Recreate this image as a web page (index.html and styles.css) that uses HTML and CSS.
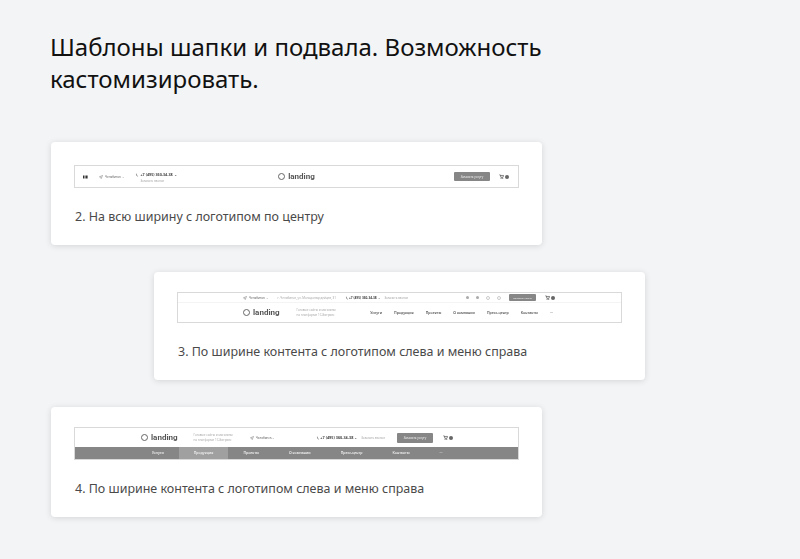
FILE: index.html
```html
<!DOCTYPE html>
<html lang="ru">
<head>
<meta charset="utf-8">
<title>Шаблоны шапки и подвала</title>
<link rel="stylesheet" href="styles.css">
</head>
<body>
<svg class="defs" width="0" height="0" aria-hidden="true">
  <symbol id="pin" viewBox="0 0 10 10"><path d="M9 1 1 4.6l3.6.9.9 3.6z" fill="none" stroke="currentColor" stroke-width="1.2"/></symbol>
  <symbol id="phone" viewBox="0 0 10 10"><path d="M3 1c-1 1-1 3 .5 5S7 9 8 8.500L6.500 6.500 5.500 7C4.500 6 4 5 3.800 4l1-.6z" fill="currentColor"/></symbol>
  <symbol id="cart" viewBox="0 0 12 12"><path d="M1 2h2l1.500 6h5L11 3.500H3.500" fill="none" stroke="currentColor" stroke-width="1.500"/><circle cx="5" cy="10.300" r="1.200" fill="currentColor"/><circle cx="9" cy="10.300" r="1.200" fill="currentColor"/></symbol>
</svg>
<main class="page">
  <h1 class="title">Шаблоны шапки и подвала. Возможность кастомизировать.</h1>

  <section class="card card-one">
    <div class="mock mock-center">
      <div class="side">
        <svg class="mark" viewBox="0 0 5 4" aria-hidden="true"><rect x="0" y="0.500" width="1.500" height="3"/><rect x="2.400" y="0.500" width="2.200" height="3"/></svg>
        <span class="city one-city"><svg class="ico"><use href="#pin"/></svg>Челябинск ⌄</span>
        <svg class="ico one-phone"><use href="#phone"/></svg>
        <div class="contact">
          <b class="tel">+7 (495) 360-34-38 ⌄</b>
          <span class="muted">Заказать звонок</span>
        </div>
      </div>
      <div class="logo"><i class="ring"></i>landing</div>
      <div class="side side-end">
        <span class="btn btn-one">Заказать услугу</span>
        <span class="basket"><svg class="cart"><use href="#cart"/></svg><i class="dot"></i></span>
      </div>
    </div>
    <p class="caption">2. На всю ширину с логотипом по центру</p>
  </section>

  <section class="card card-two">
    <div class="mock">
      <div class="top-two">
        <span class="city"><svg class="ico"><use href="#pin"/></svg>Челябинск ⌄</span>
        <span class="muted addr">г. Челябинск, ул. Молодогвардейцев, 31</span>
        <svg class="ico two-phone"><use href="#phone"/></svg>
        <b class="tel">+7 (495) 360-34-38 ⌄</b>
        <span class="muted call">Заказать звонок</span>
        <span class="socials"><i class="soc"></i><i class="soc"></i><i class="soc ring-soc"></i><i class="soc ring-soc"></i></span>
        <span class="btn btn-two">Заказать услугу</span>
        <span class="basket"><svg class="cart"><use href="#cart"/></svg><i class="dot"></i></span>
      </div>
      <div class="bottom-two">
        <div class="logo"><i class="ring"></i>landing</div>
        <div class="muted tagline">Готовые сайты и магазины<br>на платформе 1С-Битрикс</div>
        <nav class="nav-two">
          <span>Услуги</span><span>Продукция</span><span>Проекты</span><span>О компании</span><span>Пресс-центр</span><span>Контакты</span><span>···</span>
        </nav>
      </div>
    </div>
    <p class="caption">3. По ширине контента с логотипом слева и меню справа</p>
  </section>

  <section class="card card-three">
    <div class="mock">
      <div class="top-three">
        <div class="logo"><i class="ring"></i>landing</div>
        <div class="muted tagline">Готовые сайты и магазины<br>на платформе 1С-Битрикс</div>
        <span class="city three-city"><svg class="ico"><use href="#pin"/></svg>Челябинск ⌄</span>
        <svg class="ico three-phone"><use href="#phone"/></svg>
        <b class="tel">+7 (495) 360-34-38 ⌄</b>
        <span class="muted call">Заказать звонок</span>
        <span class="btn btn-three">Заказать услугу</span>
        <span class="basket"><svg class="cart"><use href="#cart"/></svg><i class="dot"></i></span>
      </div>
      <nav class="nav-three">
        <span>Услуги</span><span class="active">Продукция</span><span>Проекты</span><span>О компании</span><span>Пресс-центр</span><span>Контакты</span><span>···</span>
      </nav>
    </div>
    <p class="caption">4. По ширине контента с логотипом слева и меню справа</p>
  </section>
</main>
</body>
</html>
```
FILE: styles.css
```css
* { box-sizing: border-box; }
html, body { margin: 0; padding: 0; }
body {
  width: 800px;
  height: 559px;
  overflow: hidden;
  background: #f3f4f6;
  font-family: "Noto Sans", "Liberation Sans", sans-serif;
  color: #111;
}
.defs { position: absolute; }
.page { padding: 31px 0 0 51px; }
.title {
  margin: 0 0 47px -1px;
  width: 510px;
  font-size: 24px;
  line-height: 32px;
  font-weight: 400;
  color: #111;
}
.card {
  width: 491px;
  padding: 20px 23px 18px;
  margin-bottom: 27px;
  background: #fff;
  border-radius: 4px;
  box-shadow: 0 1px 6px rgba(0, 0, 0, .13);
}
.card-one { padding-top: 23px; }
.card-two { margin-left: 103px; }
.caption {
  margin: 19px 0 0 1px;
  font-size: 12.47px;
  line-height: 20px;
  color: #4a4a4a;
}
.mock {
  width: 445px;
  border: 1px solid #d9d9d9;
  background: #fff;
  font-size: 3px;
  line-height: 4px;
  color: #777;
  white-space: nowrap;
  filter: blur(.3px);
}
.mock-center {
  display: grid;
  grid-template-columns: 1fr auto 1fr;
  align-items: center;
  height: 23px;
}
.side { display: flex; align-items: center; padding-left: 8px; }
.side-end { justify-content: flex-end; padding: 0 9px 0 0; }
.mark { width: 5px; height: 4px; fill: #333; }
.city { display: inline-flex; align-items: center; gap: 2px; color: #666; }
.one-city { margin-left: 11px; }
.ico { width: 4px; height: 4px; flex: none; color: #777; }
.one-phone { margin: -4px 2px 0 10px; }
.contact { display: flex; flex-direction: column; gap: 2px; padding-top: 2px; }
.tel { font-size: 3.2px; font-weight: 700; color: #444; }
.contact .tel { font-size: 3.7px; }
.muted { color: #aaa; }
.logo {
  display: flex;
  align-items: center;
  gap: 3px;
  font-family: Roboto, "Noto Sans", sans-serif;
  font-size: 8px;
  line-height: 12px;
  font-weight: 700;
  color: #555;
}
.ring {
  width: 7px;
  height: 7px;
  border: 1px solid #666;
  border-radius: 50%;
}
.btn {
  display: flex;
  align-items: center;
  justify-content: center;
  background: #868686;
  color: #eee;
  border-radius: 1px;
}
.btn-one { width: 36px; height: 9px; }
.basket { display: flex; align-items: center; gap: 1px; }
.cart { width: 5px; height: 5px; color: #444; }
.dot { width: 4px; height: 4px; border-radius: 50%; background: #666; }
.side-end .basket { margin-left: 9px; }

.top-two {
  display: flex;
  align-items: center;
  height: 9px;
  padding-left: 65px;
}
.addr { margin-left: 9px; }
.two-phone { margin: 0 0 0 9px; }
.call { margin-left: 4px; }
.socials { display: flex; gap: 7px; margin-left: 58px; }
.soc { width: 3px; height: 3px; background: #aaa; border-radius: 50%; }
.ring-soc { width: 4px; height: 4px; background: none; border: 1px solid #ccc; }
.btn-two { width: 27px; height: 7px; margin-left: 8px; font-size: 2.500px; }
.top-two .basket { margin-left: 9px; }
.bottom-two {
  display: flex;
  align-items: center;
  height: 20px;
  padding-left: 65px;
  border-top: 1px solid #f4f4f4;
}
.tagline { margin-left: 17px; line-height: 5px; font-size: 3px; }
.nav-two {
  display: flex;
  gap: 12px;
  margin-left: 34.500px;
  font-size: 3.500px;
  font-weight: 600;
  color: #555;
}

.top-three {
  display: flex;
  align-items: center;
  height: 19px;
  padding-left: 66px;
}
.top-three .tagline { margin-left: 16px; }
.top-three .tel { font-size: 3.800px; }
.three-city { margin-left: 17px; }
.three-phone { margin-left: 41px; }
.btn-three { width: 36px; height: 10px; margin-left: 12px; font-size: 3px; }
.top-three .basket { margin-left: 10px; }
.nav-three {
  display: flex;
  height: 12px;
  align-items: stretch;
  padding-left: 62px;
  background: #868686;
  color: #eee;
  font-size: 3.500px;
  font-weight: 600;
}
.nav-three span { display: flex; align-items: center; padding: 0 15px; }
.nav-three .active { background: #a0a0a0; }
```
